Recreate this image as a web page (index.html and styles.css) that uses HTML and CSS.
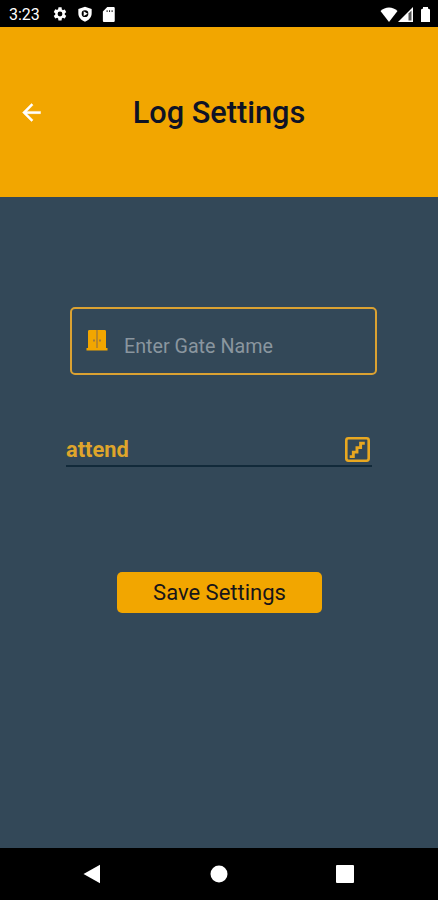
FILE: index.html
```html
<!DOCTYPE html>
<html lang="en">
<head>
  <meta charset="UTF-8">
  <meta name="viewport" content="width=device-width, initial-scale=1.0">
  <title>Log Settings</title>
  <link rel="stylesheet" href="styles.css">
</head>
<body>

<div class="status-bar">
  <span class="time">3:23</span>
  <svg class="status-icon gear" viewBox="0 0 24 24"><path fill-rule="evenodd" d="M19.14 12.94c.04-.3.06-.61.06-.94s-.02-.64-.07-.94l2.03-1.58a.49.49 0 0 0 .12-.61l-1.92-3.32a.49.49 0 0 0-.59-.22l-2.39.96a7 7 0 0 0-1.62-.94l-.36-2.54A.48.48 0 0 0 13.92 2h-3.84a.48.48 0 0 0-.48.41l-.36 2.54c-.59.24-1.13.57-1.62.94l-2.39-.96a.49.49 0 0 0-.59.22L2.72 8.87a.48.48 0 0 0 .12.61l2.03 1.58a7.5 7.5 0 0 0 0 1.88l-2.03 1.58a.49.49 0 0 0-.12.61l1.92 3.32c.12.22.37.29.59.22l2.39-.96c.5.38 1.03.7 1.62.94l.36 2.54c.05.24.24.41.48.41h3.84c.24 0 .44-.17.47-.41l.36-2.54a7 7 0 0 0 1.62-.94l2.39.96c.22.08.47 0 .59-.22l1.92-3.32a.48.48 0 0 0-.12-.61zM12 15.6a3.6 3.6 0 1 1 0-7.2 3.6 3.6 0 0 1 0 7.2z"/></svg>
  <svg class="status-icon shield" viewBox="0 0 24 24"><path fill-rule="evenodd" d="M12 1 2 4.5V11c0 5.8 4 10.5 10 12.5 6-2 10-6.7 10-12.5V4.5zM12 6.5a5 5 0 1 1 0 10 5 5 0 0 1 0-10z"/><path d="M10 8l6 3.5-6 3.5z"/></svg>
  <svg class="status-icon card" viewBox="0 0 20 24"><path fill-rule="evenodd" d="M18 0H8L1 7v15c0 1.1.9 2 2 2h15c1.1 0 2-.9 2-2V2c0-1.1-.9-2-2-2zM7 5h1.500v3H7zm4 0h1.500v3H11zm4 0h1.500v3H15z"/></svg>
  <span class="spacer"></span>
  <svg class="wifi" viewBox="0 0 18 15"><path d="M9 15 .5 4C5-.8 13-.8 17.500 4z"/></svg>
  <svg class="signal" viewBox="0 0 15 15"><path d="M0 15 15 0v15z"/><path class="signal-empty" d="M10.500 6.500 13.500 3.500v10h-3z"/></svg>
  <svg class="battery" viewBox="0 0 9 15"><path d="M0 2.500 2 1.500V0h5v1.500l2 1V15H0z"/></svg>
</div>

<header class="header">
  <a href="#" class="back" aria-label="Back">
    <svg viewBox="0 0 24 24"><path d="M20 11H7.830l5.590-5.590L12 4l-8 8 8 8 1.410-1.410L7.830 13H20z"/></svg>
  </a>
  <h1>Log Settings</h1>
</header>

<main class="content">
  <label class="gate-field">
    <svg class="door" viewBox="0 0 22 22"><path d="M2 19V2.500C2 1.500 2.500 1 3.500 1h15c1 0 1.500.5 1.500 1.500V19zM.5 19h21v2.500H.5z"/><path class="door-gap" d="M10.300 1h1.400v18h-1.400zM7 10.500h2v2H7zM13 10.500h2v2h-2z"/></svg>
    <input type="text" placeholder="Enter Gate Name">
  </label>

  <div class="type-select">
    <span>attend</span>
    <svg class="stairs" viewBox="0 0 24 24"><rect x="1.250" y="1.250" width="21.500" height="21.500" rx="2"/><path d="M4.500 18.800H8v-4.300h3.500v-4.300H15V6h4"/></svg>
  </div>

  <button type="button" class="save">Save Settings</button>
</main>

<nav class="nav-bar">
  <svg viewBox="0 0 18 20"><path d="M.5 10 17 .8v18.400z"/></svg>
  <svg viewBox="0 0 18 20"><circle cx="9" cy="10" r="8.500"/></svg>
  <svg viewBox="0 0 18 20"><rect x="0" y="1" width="18" height="18" rx="1"/></svg>
</nav>

</body>
</html>
```

FILE: styles.css
```css
* {
  box-sizing: border-box;
}
body {
  display: flex;
  flex-direction: column;
  height: 900px;
  margin: 0;
  background-color: #334858;
  font-family: Roboto, sans-serif;
}
svg {
  display: block;
  flex: none;
  fill: #fff;
}
.status-bar {
  display: flex;
  align-items: center;
  height: 27px;
  padding: 1px 8px 0 9px;
  background-color: #000;
}
.time {
  width: 43px;
  color: #fff;
  font-size: 16px;
}
.status-icon {
  width: 16px;
  height: 16px;
}
.gear {
  margin-right: 9px;
}
.shield {
  margin-right: 9px;
}
.card {
  width: 13px;
  height: 15px;
}
.spacer {
  flex: 1;
}
.wifi {
  width: 18px;
  height: 15px;
}
.signal {
  width: 15px;
  height: 15px;
  margin-right: 8px;
}
.signal-empty {
  fill: #555;
}
.battery {
  width: 9px;
  height: 15px;
}
.header {
  display: grid;
  grid-template-columns: 64px 1fr 64px;
  align-items: center;
  height: 170px;
  background-color: #f2a600;
}
.back svg {
  width: 27px;
  height: 27px;
  margin-left: 18px;
  stroke: #fff;
  stroke-width: 0.4;
}
h1 {
  margin: 0;
  color: #0e1326;
  font-size: 30.7px;
  font-weight: 500;
  text-align: center;
}
.content {
  display: flex;
  flex: 1;
  flex-direction: column;
  padding: 110px 61px 0 66px;
}
.gate-field {
  display: flex;
  height: 68px;
  margin-left: 4px;
  padding: 20px 14px 0;
  border: 2px solid #dba232;
  border-radius: 5px;
}
.door {
  width: 22px;
  height: 22px;
  fill: #f2a600;
}
.door-gap {
  fill: #a47a38;
}
.gate-field input {
  width: 220px;
  height: 24px;
  margin: 5px 0 0 16px;
  padding: 0;
  border: none;
  outline: none;
  background: none;
  color: #dba232;
  font-family: inherit;
  font-size: 19.7px;
}
.gate-field input::placeholder {
  color: #8a969f;
}
.type-select {
  display: flex;
  align-items: center;
  justify-content: space-between;
  width: 306px;
  height: 32px;
  margin-top: 60px;
  padding: 0 2px 2px 0;
  border-bottom: 2px solid #122a3a;
  color: #dfa52b;
  font-size: 21.8px;
  font-weight: 700;
}
.stairs {
  width: 25px;
  height: 25px;
  fill: none;
  stroke: #e9a820;
  stroke-width: 2.5;
}
.stairs path {
  stroke-width: 2.8;
}
.save {
  width: 205px;
  height: 41px;
  margin: 105px 0 0 51px;
  padding: 0;
  border: none;
  border-radius: 5px;
  background-color: #f2a600;
  color: #17151a;
  font-family: inherit;
  font-size: 22px;
  cursor: pointer;
}
.nav-bar {
  display: flex;
  justify-content: space-between;
  align-items: center;
  height: 52px;
  padding: 0 84px 0 83px;
  background-color: #000;
}
.nav-bar svg {
  width: 18px;
  height: 20px;
}
```
